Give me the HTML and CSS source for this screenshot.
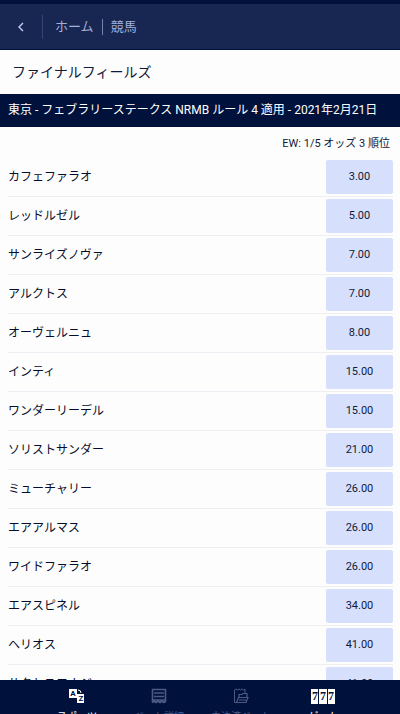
FILE: index.html
```html
<!DOCTYPE html>
<html lang="ja">

<head>
	<meta charset="utf-8">
	<meta name="viewport" content="width=device-width, initial-scale=1">
	<title>ファイナルフィールズ</title>
	<link rel="stylesheet" href="styles.css">
</head>
<body>

	<header class="topbar">
		<button type="button" class="back" aria-label="戻る">
			<svg width="8" height="10" viewBox="0 0 8 10"><path d="M6 1L2 5l4 4" fill="none" stroke="currentColor" stroke-width="1.4"/></svg>
		</button>
		<nav class="crumbs">
			<a href="#">ホーム</a>
			<a href="#">競馬</a>
		</nav>
	</header>

	<main class="content">
		<h1 class="title">ファイナルフィールズ</h1>
		<h2 class="race">東京 - フェブラリーステークス NRMB ルール 4 適用 - 2021年2月21日</h2>
		<p class="terms">EW: 1/5 オッズ 3 順位</p>

		<ul class="runners">
			<li><span>カフェファラオ</span><button type="button" class="odds">3.00</button></li>
			<li><span>レッドルゼル</span><button type="button" class="odds">5.00</button></li>
			<li><span>サンライズノヴァ</span><button type="button" class="odds">7.00</button></li>
			<li><span>アルクトス</span><button type="button" class="odds">7.00</button></li>
			<li><span>オーヴェルニュ</span><button type="button" class="odds">8.00</button></li>
			<li><span>インティ</span><button type="button" class="odds">15.00</button></li>
			<li><span>ワンダーリーデル</span><button type="button" class="odds">15.00</button></li>
			<li><span>ソリストサンダー</span><button type="button" class="odds">21.00</button></li>
			<li><span>ミューチャリー</span><button type="button" class="odds">26.00</button></li>
			<li><span>エアアルマス</span><button type="button" class="odds">26.00</button></li>
			<li><span>ワイドファラオ</span><button type="button" class="odds">26.00</button></li>
			<li><span>エアスピネル</span><button type="button" class="odds">34.00</button></li>
			<li><span>ヘリオス</span><button type="button" class="odds">41.00</button></li>
			<li><span>サクセスエナジー</span><button type="button" class="odds">41.00</button></li>
		</ul>
	</main>

	<nav class="tabs">
		<a href="#" class="active">
			<svg width="16" height="16" viewBox="0 0 16 16">
				<path d="M0 1h8v9H0zM8 6h7v9H8z" fill="#fff"/>
				<path d="M9 2q3 0 3 3" fill="none" stroke="#fff"/>
				<text x="4" y="8" class="az">A</text>
				<text x="12" y="13" class="az">Z</text>
			</svg>
			<span>スポーツ</span>
		</a>
		<a href="#">
			<svg width="16" height="16" viewBox="0 0 16 16" fill="none" stroke="currentColor">
				<path d="M1 1.500h14M1.500 1v13M14.500 1v13M3 5h10M3 8.500h10M2 12h12M1 14.500l2-1.500 2 1.500 2-1.500 2 1.500 2-1.500 2 1.500 2-1.500" stroke-width="1.600"/>
			</svg>
			<span>ベット詳細</span>
		</a>
		<a href="#">
			<svg width="16" height="16" viewBox="0 0 16 16" fill="none" stroke="currentColor">
				<path d="M3 14.500H1.500V2l1.500-1 1.500 1L6 1l1.500 1L9 1l1.500 1L12 1v4"/>
				<path d="M3.500 14.500l2-5h9.500l-2 5zM6 9V6.500h3l1-1h4V9M6 12h7" stroke-width="1.200"/>
			</svg>
			<span>未決済ベット</span>
		</a>
		<a href="#" class="active">
			<svg width="24" height="16" viewBox="0 0 24 16">
				<path d="M0 1h7v15H0zM8 1h8v15H8zM17 1h7v15h-7z" fill="#fff"/>
				<text x="4" y="12" class="seven">7</text>
				<text x="12" y="12" class="seven">7</text>
				<text x="20" y="12" class="seven">7</text>
			</svg>
			<span>ゲーム</span>
		</a>
	</nav>

</body>

</html>
```
FILE: styles.css
```css
* {
  box-sizing: border-box;
}

body {
  display: flex;
  flex-direction: column;
  height: 100vh;
  margin: 0;
  background: #fdfdfd;
  color: #10193a;
  font: 12px/16px Roboto, "Noto Sans CJK JP", sans-serif;
}

a {
  color: inherit;
  text-decoration: none;
}

button {
  border: 0;
  font: inherit;
}

.topbar {
  display: flex;
  flex: none;
  align-items: center;
  height: 50px;
  border-top: 4px solid #00123c;
  border-bottom: 1px solid #00123c;
  background: #172751;
  color: #a3b0db;
}

.back {
  display: flex;
  align-items: center;
  justify-content: center;
  width: 43px;
  height: 24px;
  padding: 0;
  border-right: 1px solid #354574;
  background: none;
  color: #c3cef2;
}

.crumbs {
  display: flex;
  padding-left: 12px;
  font-size: 13px;
}

.crumbs a + a {
  margin-left: 8px;
  padding-left: 8px;
  border-left: 1px solid #7683b0;
}

.content {
  flex: 1;
  min-height: 0;
  overflow-y: auto;
  scrollbar-width: none;
}

.title {
  margin: 0;
  padding: 12px;
  font-size: 14px;
  font-weight: 400;
  line-height: 20px;
}

.race {
  margin: 0;
  padding: 8px 8px 9px;
  background: #00123c;
  color: #fff;
  font-size: 12px;
  font-weight: 400;
  white-space: nowrap;
}

.terms {
  margin: 0;
  padding: 9px 10px 6px;
  font-size: 11px;
  text-align: right;
}

.runners {
  margin: 0;
  padding: 0 7px 0 8px;
  list-style: none;
}

.runners li {
  display: flex;
  align-items: center;
  justify-content: space-between;
  height: 39px;
  border-bottom: 1px solid #eeeff2;
  color: #060d2b;
}

.odds {
  width: 67px;
  height: 34px;
  padding: 0;
  border-radius: 2px;
  background: #d6e0fd;
  color: #10193a;
  font-size: 11px;
}

.tabs {
  display: flex;
  flex: none;
  height: 34px;
  padding: 8px 36px 0;
  overflow: hidden;
  background: #00123c;
  color: #4b5a83;
  font-size: 10px;
}

.tabs a {
  display: flex;
  flex: 1;
  flex-direction: column;
  align-items: center;
  gap: 5px;
  white-space: nowrap;
}

.tabs svg {
  flex: none;
}

.tabs .active {
  color: #fff;
}

.az,
.seven {
  fill: #00123c;
  font: bold 8px Roboto, sans-serif;
  text-anchor: middle;
}

.seven {
  font: bold 12px "Liberation Serif", serif;
}
```
